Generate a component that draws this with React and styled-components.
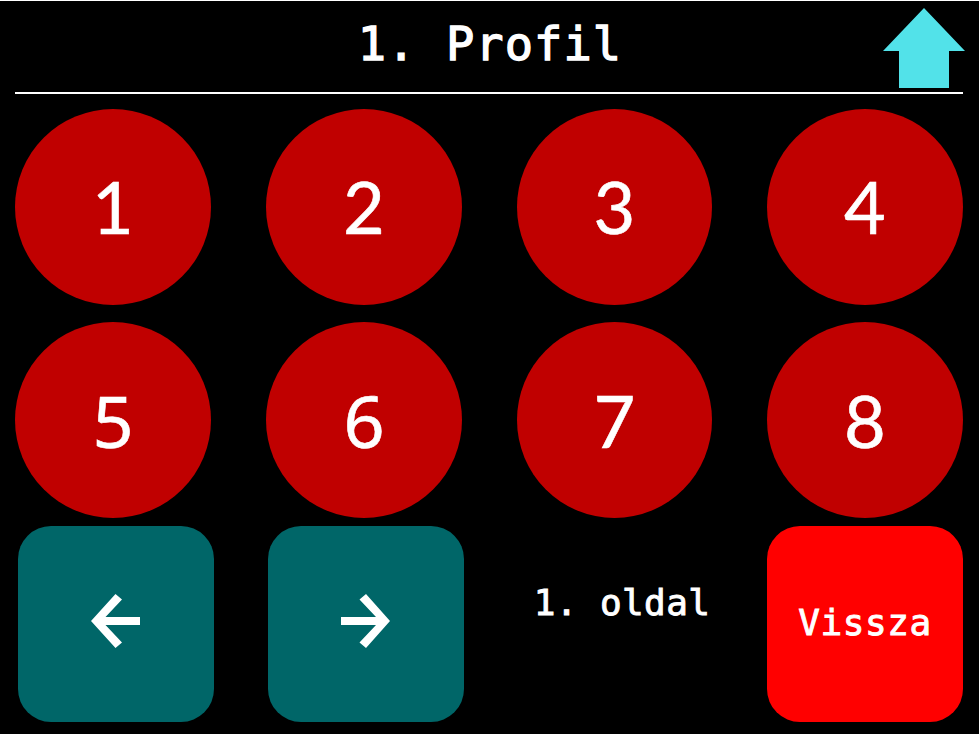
import React from "react";
import styled, { createGlobalStyle } from "styled-components";

const GlobalStyle = createGlobalStyle`
  * { box-sizing: border-box; }
  body { margin: 0; background: #000; overflow: hidden; }
`;

const Screen = styled.main`
  width: 979px;
  height: 734px;
  border-top: 1px solid #fff;
  padding: 0 16px 0 15px;
  background: #000;
  color: #fff;
  font-family: "DejaVu Sans Mono", monospace;
`;

const Header = styled.header`
  display: grid;
  grid-template-columns: 82px 1fr 82px;
  height: 93px;
  margin-right: -2px;
`;

const Rule = styled.div`
  height: 2px;
  margin-top: -2px;
  background: #fff;
`;

const Title = styled.h1`
  grid-column: 2;
  margin: 0;
  padding-top: 13px;
  text-align: center;
  white-space: nowrap;
  font-size: 47px;
  font-weight: 400;
  line-height: 60px;
  letter-spacing: 1.1px;
  -webkit-text-stroke: 1.3px #fff;
`;

const HomeButton = styled.button`
  width: 82px;
  height: 81px;
  margin-top: 7px;
  padding: 0;
  border: 0;
  background: none;
  svg { display: block; }
`;

const Grid = styled.div`
  display: grid;
  grid-template-columns: 196px 196px 195px 196px;
  column-gap: 55px;
`;

const ProfileGrid = styled(Grid)`
  grid-auto-rows: 196px;
  row-gap: 17px;
  margin-top: 15px;
`;

const ProfileButton = styled.button`
  border: 0;
  border-radius: 50%;
  padding: 0 0 ${(p) => (p.$lower ? 0 : 2)}px;
  background: #c00000;
  color: #fff;
  font: 400 72px/80px ${(p) => (p.$round ? '"Noto Sans"' : "Lato")}, sans-serif;
  -webkit-text-stroke: 0.6px #fff;
`;

const Footer = styled(Grid)`
  margin-top: 8px;
`;

const ActionButton = styled.button`
  display: flex;
  align-items: center;
  justify-content: center;
  width: 196px;
  height: 196px;
  margin-left: ${(p) => p.$shift || 0}px;
  padding: 0 0 ${(p) => p.$lift || 0}px;
  border: 0;
  border-radius: 33px;
  background: ${(p) => p.$color};
  color: #fff;
  font: 400 36px/44px "DejaVu Sans Mono", monospace;
  letter-spacing: 0.6px;
  -webkit-text-stroke: 0.9px #fff;
`;

const PageLabel = styled.div`
  padding-top: 55px;
  padding-left: 15px;
  text-align: center;
  white-space: nowrap;
  font-size: 36px;
  line-height: 44px;
  letter-spacing: 0.4px;
  -webkit-text-stroke: 0.9px #fff;
`;

const UpArrow = () => (
  <svg width="82" height="81" viewBox="0 0 82 81" fill="#52e2e9">
    <path d="M41 0 82 43H66V80H16V43H0Z" />
  </svg>
);

const LeftArrow = () => (
  <svg width="50" height="54" viewBox="0 0 50 54" fill="#fff">
    <path d="M0 27 24.500 0 31 5.500 14.500 23H49V31H14.500L31 48.500 24.500 54Z" />
  </svg>
);

const RightArrow = () => (
  <svg width="50" height="54" viewBox="0 0 50 54" fill="#fff">
    <path d="M49 27 25 0 18.500 5.500 35 23H0V31H35L18.500 48.500 25 54Z" />
  </svg>
);

export default function App() {
  return (
    <>
      <GlobalStyle />
      <Screen>
        <Header>
          <Title>1. Profil</Title>
          <HomeButton aria-label="Fel"><UpArrow /></HomeButton>
        </Header>
        <Rule />
        <ProfileGrid>
          {[1, 2, 3, 4, 5, 6, 7, 8].map((n) => (
            <ProfileButton key={n} $lower={n > 4} $round={n === 5 || n === 6}>{n}</ProfileButton>
          ))}
        </ProfileGrid>
        <Footer>
          <ActionButton $color="#006668" $shift={3} $lift={6} aria-label="Előző"><LeftArrow /></ActionButton>
          <ActionButton $color="#006668" $shift={2} $lift={6} aria-label="Következő"><RightArrow /></ActionButton>
          <PageLabel>1. oldal</PageLabel>
          <ActionButton $color="#ff0000" $lift={2}>Vissza</ActionButton>
        </Footer>
      </Screen>
    </>
  );
}
